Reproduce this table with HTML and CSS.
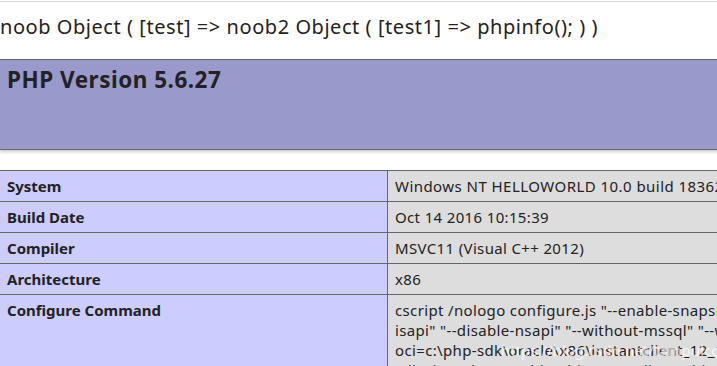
FILE: index.html
```html
<!DOCTYPE html>
<html>
<head>
<meta charset="utf-8">
<link rel="stylesheet" href="styles.css">
</head>
<body>
<div class="topline"></div>
<pre class="dump">noob Object ( [test] =&gt; noob2 Object ( [test1] =&gt; phpinfo(); ) )</pre>
<div class="center">
  <table class="head">
    <tr><td class="h"><h1 class="title">PHP Version 5.6.27</h1></td></tr>
  </table>
  <table class="info">
    <colgroup><col class="c1"><col class="c2"></colgroup>
    <tr><td class="e">System</td><td class="v sys">Windows NT HELLOWORLD 10.0 build 18362 (Windows 10) i586</td></tr>
    <tr><td class="e">Build Date</td><td class="v">Oct 14 2016 10:15:39</td></tr>
    <tr><td class="e">Compiler</td><td class="v">MSVC11 (Visual C++ 2012)</td></tr>
    <tr><td class="e">Architecture</td><td class="v">x86</td></tr>
    <tr><td class="e">Configure Command</td><td class="v cmd">cscript /nologo configure.js "--enable-snapshot-build" "--enable-debug-pack" "--disable-zts" "--disable-<br>isapi" "--disable-nsapi" "--without-mssql" "--without-pdo-mssql" "--without-pi3web" "--with-pdo-<br>oci=c:\php-sdk\oracle\x86\instantclient_12_1\sdk,shared" "--with-oci8-12c=c:\php-sdk\oracle\x86\instantclient_12_1\<br>sdk,shared" "--enable-object-out-dir=../obj/" "--enable-com-dotnet=shared" "--with-mcrypt=static" "--without-analyzer"<span class="watermark">https://blog.csdn.net/tampulcc</span></td></tr>
  </table>
</div>
</body>
</html>
```
FILE: styles.css
```css
html, body {
  margin: 0;
  padding: 0;
  overflow: hidden;
  background: #fff;
  color: #222;
  font-family: "Noto Sans", "Open Sans", sans-serif;
}
.topline {
  margin-top: 1px;
  height: 1px;
  background: #dedede;
}
.dump {
  margin: 11px 0 0 0;
  font-family: "Noto Sans", sans-serif;
  font-size: 20px;
  line-height: 27px;
  letter-spacing: 0.55px;
  white-space: pre;
  color: #222;
}
.center {
  margin-left: -1px;
}
table {
  border-collapse: collapse;
  table-layout: fixed;
  width: 1168px;
}
.head {
  margin-top: 19px;
  box-shadow: 1px 2px 3px #ccc;
}
.h {
  background: #99c;
  border: 1px solid #666;
  height: 90px;
  padding: 5px 7px;
  vertical-align: top;
  box-sizing: border-box;
}
.title {
  margin: 0;
  font-size: 22.5px;
  line-height: 30px;
  letter-spacing: 0.5px;
  font-weight: bold;
}
.info {
  margin-top: 20px;
  box-shadow: 1px 2px 3px #ccc;
}
.c1 { width: 388px; }
td {
  border: 1px solid #666;
  font-size: 15px;
  line-height: 20px;
  padding: 5px 7px;
  vertical-align: baseline;
  white-space: nowrap;
  overflow: hidden;
}
.e {
  background: #ccf;
  font-weight: bold;
}
.v {
  background: #ddd;
  letter-spacing: 0.35px;
}
.v.sys {
  letter-spacing: 0.45px;
}
.cmd {
  position: relative;
}
.watermark {
  position: absolute;
  left: 113px;
  top: 45px;
  font-size: 15px;
  letter-spacing: 0;
  color: rgba(255, 255, 255, 0.7);
  white-space: nowrap;
}
```
